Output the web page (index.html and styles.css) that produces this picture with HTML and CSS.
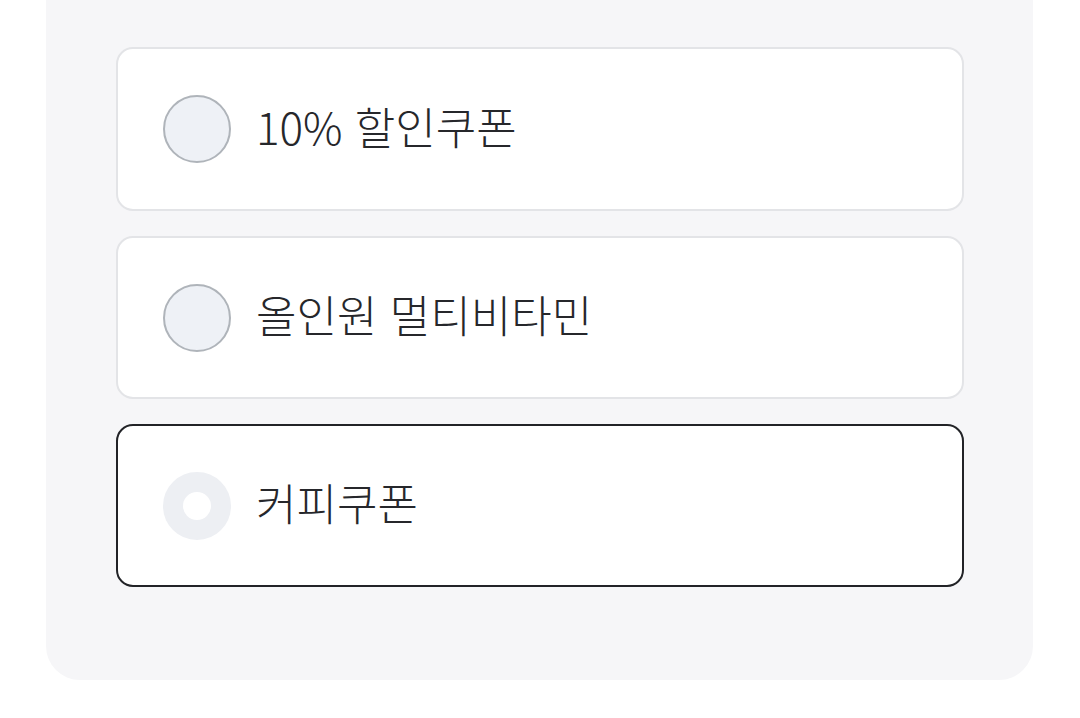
FILE: index.html
```html
<!DOCTYPE html>
<html lang="ko">
	<head>
		<meta charset="utf-8">
		<title>쿠폰 선택</title>
		<meta name="viewport" content="width=device-width, initial-scale=1.0">
		<link rel="stylesheet" href="styles.css">
	</head>
	<body>
		<section class="panel">
			<ul class="options">
				<li class="option">
					<span class="radio"></span>
					<span class="label">10% 할인쿠폰</span>
				</li>
				<li class="option">
					<span class="radio"></span>
					<span class="label">올인원 멀티비타민</span>
				</li>
				<li class="option selected">
					<span class="radio"></span>
					<span class="label">커피쿠폰</span>
				</li>
			</ul>
		</section>
	</body>
</html>
```

FILE: styles.css
```css
body {
	margin: 0;
	padding: 0;
	background: #ffffff;
	font-family: "Noto Sans CJK KR", "Noto Sans", sans-serif;
}
* {
	box-sizing: border-box;
}
ul, li {
	margin: 0;
	padding: 0;
	list-style: none;
}
.panel {
	margin-left: 46px;
	width: 987px;
	padding: 47px 69px 93px 70px;
	background: #f6f6f8;
	border-radius: 0 0 34px 34px;
}
.options {
	display: flex;
	flex-direction: column;
	gap: 25px;
}
.option {
	display: flex;
	align-items: center;
	gap: 25px;
	height: 164px;
	padding-left: 45px;
	background: #ffffff;
	border: 2px solid #e3e4e7;
	border-radius: 17px;
}
.option + .option {
	height: 163px;
}
.option.selected {
	border-color: #222327;
}
.radio {
	flex: none;
	width: 68px;
	height: 68px;
	border-radius: 50%;
	background: #eef1f6;
	border: 2px solid #afb4ba;
}
.selected .radio {
	border: 20px solid #edeff3;
	background: #ffffff;
}
.label {
	font-size: 44px;
	font-weight: 300;
	line-height: 1.2;
	padding-bottom: 6px;
	color: #26272b;
}
```
